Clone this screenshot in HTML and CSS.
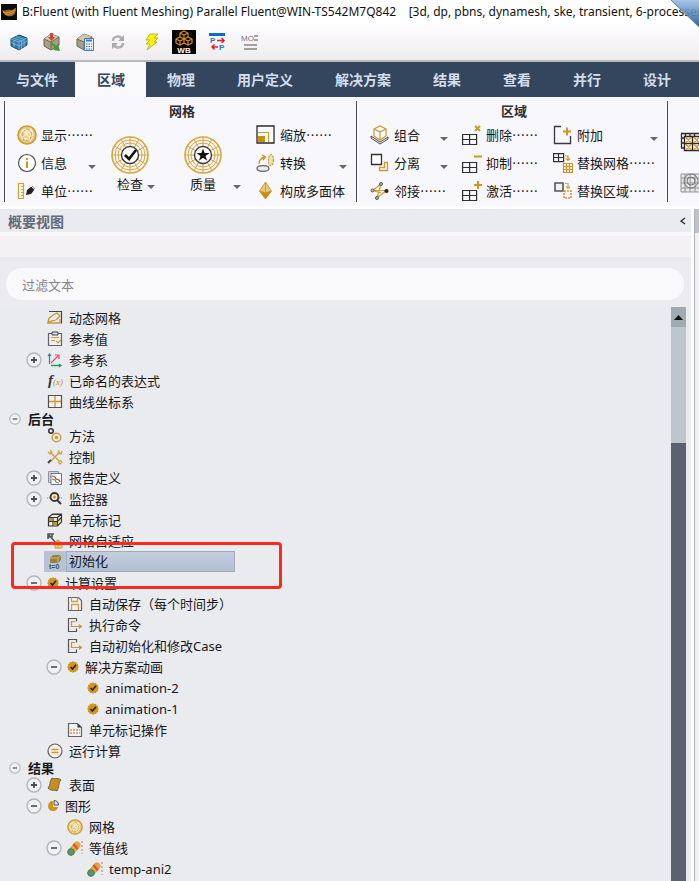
FILE: index.html
```
<!DOCTYPE html>
<html lang="zh-CN">
<head>
<meta charset="utf-8">
<meta name="viewport" content="width=device-width, initial-scale=1">
<title>Fluent</title>
<link rel="stylesheet" href="styles.css">
</head>
<body>
<svg class="defs" aria-hidden="true">
  <defs>
    <linearGradient id="fold" x1="0" y1="0" x2="0" y2="1"><stop offset="0" stop-color="#9fc0e2"/><stop offset="1" stop-color="#1f5798"/></linearGradient>
    <linearGradient id="heat" x1="0" y1="1" x2="1" y2="0"><stop offset="0" stop-color="#3d9a50"/><stop offset=".3" stop-color="#8fb548"/><stop offset=".55" stop-color="#f0b030"/><stop offset=".75" stop-color="#e23a2c"/><stop offset="1" stop-color="#e9a545"/></linearGradient>
    <symbol id="minus" viewBox="0 0 16 16"><circle cx="8" cy="8" r="7" fill="#f1f1f4" stroke="#b2b4ba" stroke-width="1.4"/><path d="M5 8h6" stroke="#4b4d55" stroke-width="1.6"/></symbol>
    <symbol id="plus" viewBox="0 0 16 16"><circle cx="8" cy="8" r="7" fill="#f1f1f4" stroke="#b2b4ba" stroke-width="1.4"/><path d="M5 8h6M8 5v6" stroke="#4b4d55" stroke-width="1.8"/></symbol>
    <symbol id="down" viewBox="0 0 8 4"><path d="M0 0h8L4 4z" fill="#66666b"/></symbol>
    <symbol id="mesh" viewBox="0 0 20 20"><circle cx="10" cy="10" r="9" fill="#e9c780" stroke="#cf9a2c" stroke-width="1.6"/><path d="M4 6l4-2 4 2 4 0M3 10l3-4 4 3 4-5 2 6-4 2-3-3-4 4-2-3M5 14l4-1 4 3 3-4M7 17l2-4 4 3-1-4M8 4l2 5M12 6l2 6" fill="none" stroke="#fdf5e2" stroke-width="1.1"/><path d="M5 8l5-4 5 4-2 7-6 1z" fill="none" stroke="#c88e18" stroke-width=".5"/></symbol>
    <symbol id="web" viewBox="0 0 38 38"><g fill="none" stroke="#dba536"><circle cx="19" cy="19" r="18" stroke-width="1.6"/><circle cx="19" cy="19" r="15"/><circle cx="19" cy="19" r="12"/><path d="M1 19h36M19 1v36M3.400 10l31.200 18M3.400 28L34.600 10M10 3.400l18 31.200M28 3.400L10 34.600"/></g><circle cx="19" cy="19" r="8.500" fill="#fff" stroke="#3c3c3e" stroke-width="1.4"/></symbol>
    <symbol id="check-badge" viewBox="0 0 12 12"><path d="M6 0l1.300 1.300L9 .8l.6 1.700 1.700.5-.5 1.700L12 6l-1.200 1.300.5 1.700-1.700.6L9 11.300l-1.700-.5L6 12l-1.300-1.200-1.700.5-.6-1.700L.8 9l.5-1.700L0 6l1.300-1.300L.8 3l1.600-.5L3 .8l1.700.5z" fill="#d2951b"/><path d="M3.500 6l2 2L9 3.700" fill="none" stroke="#26231d" stroke-width="1.600"/></symbol>
    <symbol id="grid4" viewBox="0 0 22 20"><path d="M.6 9.500h14v10H.6zM7.600 9.500v10M.6 14.500h14" fill="none" stroke="#303033" stroke-width="1.200"/></symbol>
    <symbol id="export" viewBox="0 0 16 16"><path d="M9.500 4.500v-3h-8v13h8v-3" fill="none" stroke="#55565a" stroke-width="1.200"/><path d="M8 4.500H4.500v5H13" fill="none" stroke="#cc962a" stroke-width="1.200"/><path d="M12 7l3.500 2.500L12 12z" fill="#cc962a"/></symbol>
    <symbol id="contour" viewBox="0 0 16 16"><path d="M4 12L10 5" stroke="url(#heat)" stroke-width="7" stroke-linecap="round"/><circle cx="4" cy="12" r="3.200" fill="#65926c" stroke="#557961"/><path d="M15 1v13" stroke="#bb8250" stroke-dasharray="2 2"/></symbol>
    <symbol id="cube" viewBox="0 0 18 18"><path d="M1 6l8-4 8 3v7l-8 5-8-4z" fill="#337caa" stroke="#194b70"/><path d="M1 6l8 3 8-4M9 9v8M1 9.500l8 3.500 8-5M3.500 5l8 3v8M6 3.500l8 3v7.500M4 7v7" fill="none" stroke="#8cc2e0" stroke-width=".7"/></symbol>
    <symbol id="box" viewBox="0 0 18 18"><path d="M1 6l7-5 8 3v8l-8 5-7-4z" fill="#a99f86" stroke="#6c6450"/><path d="M1 6l7 3 8-5L8 1z" fill="#d0c8b2"/><path d="M1 6l7 3v8M8 9l8-5" fill="none" stroke="#746b56"/></symbol>
  </defs>
</svg>

<header class="titlebar">
  <svg class="app-icon" viewBox="0 0 16 16" aria-hidden="true"><path fill="#0c0b09" d="M0 0h16v16H0z"/><path d="M1 6c4 2 6-2 9 0 2 1 3-2 5-2 0 4-1 7-4 8-4 1-8 0-10-6z" fill="#9b6a1c"/><path d="M2 8c4 2 7 0 12-2M4 10c4 1 6 0 9-2" stroke="#dca144" fill="none"/></svg>
  <h1>B:Fluent (with Fluent Meshing) Parallel Fluent@WIN-TS542M7Q842 &nbsp;&nbsp;&nbsp;[3d, dp, pbns, dynamesh, ske, transient, 6-processes]</h1>
  <svg class="fold" viewBox="0 0 28 27" aria-hidden="true"><path d="M0 0h28v27z" fill="url(#fold)" fill-opacity=".92"/><path d="M0 0l28 27" stroke="#607d9e"/></svg>
</header>

<div class="toolbar" role="toolbar" aria-label="工具栏">
  <button aria-label="网格"><svg class="i18"><use href="#cube"/></svg></button>
  <button aria-label="导入"><svg class="i18" viewBox="0 0 18 18"><use href="#box"/><path d="M7 0h3v4h2L8.500 8 5 4h2z" fill="#c94a32"/><path d="M9 9l4 4 2-2 2 7-7-1 2-2-4-4z" fill="#3c9b32"/></svg></button>
  <button aria-label="计算"><svg class="i18" viewBox="0 0 18 18"><use href="#box"/><path d="M8.500 5.500h9v12h-9z" fill="#edf3fb" stroke="#4779b2"/><path d="M10 7.500h6" stroke="#4779b2" stroke-width="2"/><path d="M10 11h6M10 13.500h6M10 16h6" stroke="#356ba9" stroke-dasharray="1.500 1"/></svg></button>
  <button aria-label="刷新"><svg class="i18" viewBox="0 0 18 18"><path d="M4 8c0-5 7-6 9-2M14 10c0 5-7 6-9 2" fill="none" stroke="#b0b0b1" stroke-width="2.500"/><path d="M15 2v6H9zM3 16v-6h6z" fill="#aaaaab"/></svg></button>
  <button aria-label="快速执行"><svg class="i18" viewBox="0 0 18 18"><path d="M8 1h8l-4 4h4l-4 4h3L5 17l3-6H4l4-4H4z" fill="#fff30a" stroke="#b5a818" stroke-width=".8"/></svg></button>
  <button aria-label="Workbench"><svg class="i24" viewBox="0 0 24 24"><path fill="#050505" d="M0 0h24v24H0z"/><g fill="none" stroke="#d58c1c" stroke-width="1.200"><path d="M12 1l4 2v4l-4 2-4-2V3zM8 3l4 2 4-2M12 5v4M8 7l4 2v4l-4 2-4-2V9zM4 9l4 2 4-2M8 11v4M16 7l4 2v4l-4 2-4-2V9zM12 9l4 2 4-2M16 11v4"/></g><text x="12" y="23" class="wb">WB</text></svg></button>
  <button aria-label="参数"><svg class="i18" viewBox="0 0 18 18"><path d="M1 1.500h16" stroke="#0870cb" stroke-width="3"/><text x="2" y="10" class="pp">P</text><text x="11" y="17" class="pp">P</text><path d="M9 7.500h7M13.500 5L16 7.500 13.500 10M10 14H4M6.500 11.500L4 14l2.500 2.500" fill="none" stroke="#e41c28" stroke-width="1.500"/></svg></button>
  <button aria-label="监视"><svg class="i18" viewBox="0 0 18 18"><text x="0" y="8" class="mo">MO</text><path d="M13 3h4M13 7h4M3 12h13M3 16h13" stroke="#858587" stroke-width="1.700"/></svg></button>
</div>

<nav class="tabs">
  <a href="#file" class="file">与文件</a>
  <a href="#domain" class="active" aria-current="page">区域</a>
  <a href="#physics">物理</a>
  <a href="#user">用户定义</a>
  <a href="#solution">解决方案</a>
  <a href="#results">结果</a>
  <a href="#view">查看</a>
  <a href="#parallel">并行</a>
  <a href="#design">设计</a>
</nav>

<div class="ribbon">
  <span class="sep"></span>
  <section class="group group-mesh">
    <h2>网格</h2>
    <div class="col">
      <button><svg class="ico"><use href="#mesh"/></svg>显示……</button>
      <button><svg class="ico" viewBox="0 0 20 20"><circle cx="10" cy="10" r="8.500" fill="#fff" stroke="#4e4e52" stroke-width="1.200"/><path d="M10 8.500V15M10 5v2" stroke="#ce981d" stroke-width="2"/></svg>信息<svg class="arrow"><use href="#down"/></svg></button>
      <button><svg class="ico" viewBox="0 0 20 20"><path d="M1.500 2.500h5v15h-5zM4 5.500h2.500M4 8.500h2.500M4 11.500h2.500M4 14.500h2.500" fill="none" stroke="#d4a02e" stroke-width="1.200"/><path d="M9 14l1-5 5-4 3 3-4 5z" fill="#222226"/><path d="M14 5l4 4" stroke="#f7f6f8"/></svg>单位……</button>
    </div>
    <div class="col">
      <button class="big"><svg class="i38" viewBox="0 0 38 38"><use href="#web"/><path d="M14 19l4 4 7-9" fill="none" stroke="#111" stroke-width="2.600"/></svg><span class="caption">检查<svg class="arrow near"><use href="#down"/></svg></span></button>
    </div>
    <div class="col">
      <button class="big"><svg class="i38" viewBox="0 0 38 38"><use href="#web"/><path d="M19 12.500l1.600 4.600h4.900l-4 2.900 1.600 4.700-4.100-2.900-4.100 2.900 1.600-4.700-4-2.900h4.900z" fill="#111"/></svg><span class="caption">质量<svg class="arrow"><use href="#down"/></svg></span></button>
    </div>
    <div class="col">
      <button><svg class="ico" viewBox="0 0 20 20"><path d="M1 1h17v17H1z" fill="#fff" stroke="#29292c" stroke-width="1.300"/><path d="M2 11h7v6H2z" fill="#c88d13"/><path d="M2 7.500h10.500V17" fill="none" stroke="#d09a2e" stroke-width="1.200"/></svg>缩放……</button>
      <button><svg class="ico" viewBox="0 0 20 20"><ellipse cx="7" cy="15.500" rx="6" ry="2.800" fill="#ececec" stroke="#636365" stroke-width="1.200"/><path d="M3 11C3 7 5 5 9 4M6 2l3.500 2L7 7" fill="none" stroke="#cc9527" stroke-width="1.300"/><ellipse cx="15" cy="7" rx="2.500" ry="5.500" fill="#f1dfba" stroke="#cf9d36" stroke-width="1.300" stroke-dasharray="2 1"/></svg>转换<svg class="arrow"><use href="#down"/></svg></button>
      <button><svg class="ico" viewBox="0 0 20 20"><path d="M9.500 1l6 9-6 8-6-8z" fill="#e8c77c"/><path d="M3.500 10l6 2 6-2-6 8z" fill="#c78b12"/><path d="M9.500 1l6 9-6 8-6-8zM9.500 1v11M3.500 10l6 2 6-2" fill="none" stroke="#c99122" stroke-width=".8"/></svg>构成多面体</button>
    </div>
  </section>
  <span class="sep"></span>
  <section class="group group-zone">
    <h2>区域</h2>
    <div class="col">
      <button><svg class="ico" viewBox="0 0 20 20"><path d="M1 11l9 6 8-5v2l-8 5-9-6z" fill="#fff" stroke="#454548"/><path d="M4 4l6-3 6 3v7l-6 4-6-4zM4 4l6 3 6-3M10 7v8" fill="#fff" stroke="#cc962b" stroke-width="1.200"/></svg>组合<svg class="arrow"><use href="#down"/></svg></button>
      <button><svg class="ico" viewBox="0 0 20 20"><path d="M1.500 1.500h10v10h-10z" fill="#fff" stroke="#303033" stroke-width="1.300"/><path d="M14.500 9.500h3v8h-8v-3h5z" fill="none" stroke="#cf9830" stroke-width="1.300"/></svg>分离<svg class="arrow"><use href="#down"/></svg></button>
      <button><svg class="ico" viewBox="0 0 20 20"><path d="M2.500 9.500h14L7 17l4-14zM2.500 9.500L11 12" fill="none" stroke="#d19b2c" stroke-width="1.200"/><g fill="#bbb" stroke="#55565a"><circle cx="2.500" cy="9.500" r="1.500"/><circle cx="11" cy="3" r="1.500"/><circle cx="7" cy="17" r="1.500"/></g><circle cx="16.500" cy="10" r="2" fill="#222"/></svg>邻接……</button>
    </div>
    <div class="col">
      <button><svg class="ico" viewBox="0 0 20 20"><use href="#grid4" width="22" height="20"/><path d="M13 1l5 5M18 1l-5 5" stroke="#cf9721" stroke-width="2"/></svg>删除……</button>
      <button><svg class="ico" viewBox="0 0 20 20"><use href="#grid4" width="22" height="20"/><path d="M12 3.500h8" stroke="#cf9721" stroke-width="2"/></svg>抑制……</button>
      <button><svg class="ico" viewBox="0 0 20 20"><use href="#grid4" width="22" height="20"/><path d="M12 4h8M16 0v8" stroke="#cf9721" stroke-width="2"/></svg>激活……</button>
    </div>
    <div class="col">
      <button><svg class="ico" viewBox="0 0 20 20"><path d="M8 1.500H1.500v17h16V11" fill="none" stroke="#39393c" stroke-width="1.300"/><path d="M10 6.500h8M14 2.500v8" stroke="#cf9721" stroke-width="2"/></svg>附加<svg class="arrow"><use href="#down"/></svg></button>
      <button><svg class="ico" viewBox="0 0 20 20"><path d="M.6.6h10v8H.6zM5.500.600v8M.6 4.500h10" fill="none" stroke="#303033" stroke-width="1.200"/><path d="M12 3h3v4M13 5.500l2 2 2-2M10.500 10.500h9v9h-9zM13.500 10.500v9M16.500 10.500v9M10.500 13.500h9M10.500 16.500h9" fill="none" stroke="#cf9721" stroke-width="1.200"/></svg>替换网格……</button>
      <button><svg class="ico" viewBox="0 0 20 20"><path d="M2 2h8v8H2z" fill="#f1f0f2" stroke="#555558" stroke-width="1.600"/><path d="M12 2.500h3V7M13 5.500l2 2 2-2" fill="none" stroke="#cfa654" stroke-width="1.200"/><path d="M11 10h7v7h-7z" fill="none" stroke="#cf9a32" stroke-width="1.600" stroke-dasharray="2 1"/></svg>替换区域……</button>
    </div>
  </section>
  <span class="sep"></span>
  <section class="group-more">
    <button aria-label="叠加网格"><svg class="i24" viewBox="0 0 24 24"><path d="M1 3.500h18M1 8h3M1 13h3M1 18h3M1.500 3v15M5.500 3v3M10 3v3M14.500 3v3M1 3.500h18" stroke="#29292c" stroke-width="1.300"/><path d="M4.500 6.500h18v14h-18zM12.500 6.500v14M4.500 13.500h18" fill="#fff" stroke="#29292c" stroke-width="1.400"/><path d="M6 7.500l5 5M11 7.500l-5 5M14 7.500l5 5M19 7.500l-5 5M6 14.500l5 5M11 14.500l-5 5M14 14.500l5 5M19 14.500l-5 5" stroke="#cf9830" stroke-width="1.500"/></svg></button>
    <button aria-label="湍流网格"><svg class="i24" viewBox="0 0 24 24"><path d="M1 2h22v18H1zM1 6h22M1 11h22M1 16h22M5 2v18M10 2v18M15 2v18M20 2v18" fill="#e7e7e8" stroke="#929296"/><circle cx="11" cy="9" r="7" fill="none" stroke="#77777b"/><circle cx="11" cy="9" r="4" fill="none" stroke="#77777b"/></svg></button>
  </section>
</div>

<main class="workspace">
  <section class="outline">
    <div class="panel-head"><h2>概要视图</h2><button aria-label="收起"><svg class="chev" viewBox="0 0 6 8"><path d="M5 1L1 4l4 3" fill="none" stroke="#303136" stroke-width="1.400"/></svg></button></div>
    <div class="strip"></div>
    <div class="filter"><input type="text" placeholder="过滤文本" aria-label="过滤文本"></div>
    <div class="tree-area">
      <ul class="tree">
        <li><span class="toggle"></span><span class="item"><svg viewBox="0 0 16 16"><path d="M2 1.500h12.500v12" fill="none" stroke="#444549" stroke-width="1.200"/><path d="M1 13c0-7 3-5 5-8l4-2 3 3-3 3c-2 3-6 0-9 4h12v-4" fill="none" stroke="#c9972f" stroke-width="1.300"/></svg>动态网格</span></li>
        <li><span class="toggle"></span><span class="item"><svg viewBox="0 0 16 16"><path d="M1.500 2.500h13v12h-13z" fill="#f1f0ef" stroke="#626369" stroke-width="1.200"/><path d="M5 1h6v3H5z" fill="#ddd" stroke="#444549"/><path d="M4 6.500h8M4 9.500h4M9 10l2 2 3-3" fill="none" stroke="#cc9c3c" stroke-width="1.200"/></svg>参考值</span></li>
        <li><button class="toggle" aria-label="展开"><svg><use href="#plus"/></svg></button><span class="item"><svg viewBox="0 0 16 16"><path d="M2.500 12V3M1 4l1.500-2L4 4" fill="none" stroke="#267eb5" stroke-width="1.200"/><path d="M4 11l7-7M8 3h4v4" fill="none" stroke="#df5050" stroke-width="1.200"/><path d="M4 13.500h10M12 12l2 1.500-2 1.500" fill="none" stroke="#2b9b63" stroke-width="1.300"/></svg>参考系</span></li>
        <li><span class="toggle"></span><span class="item"><svg viewBox="0 0 16 16"><text x="1" y="12" class="fx">f</text><text x="6" y="12" class="fx-arg">(x)</text></svg>已命名的表达式</span></li>
        <li><span class="toggle"></span><span class="item"><svg viewBox="0 0 16 16"><path d="M1.500 1.500h13v12h-13z" fill="#f6f2ea" stroke="#505157" stroke-width="1.200"/><path d="M8 2v11M2 7.500h12" stroke="#c9953a" stroke-width="1.300"/></svg>曲线坐标系</span></li>
        <li class="root"><button class="toggle" aria-label="收起"><svg><use href="#minus"/></svg></button><strong>后台</strong></li>
        <li><span class="toggle"></span><span class="item"><svg viewBox="0 0 16 16"><circle cx="4" cy="3" r="2.200" fill="none" stroke="#333338" stroke-width="1.600"/><circle cx="9.500" cy="9.500" r="4.300" fill="none" stroke="#cfa044" stroke-width="1.500"/><circle cx="9.500" cy="9.500" r="1.800" fill="#cf9a32"/></svg>方法</span></li>
        <li><span class="toggle"></span><span class="item"><svg viewBox="0 0 16 16"><path d="M3 3l10 10M13 3L4 12" stroke="#d0a650" stroke-width="1.600"/><path d="M1 3l2 2 2-2-2-2M12 1l-1 3 3 1 1-3M11 13l2 2 2-2-2-2" fill="none" stroke="#d0a650" stroke-width="1.300"/><path d="M1 14l3-3" stroke="#434349" stroke-width="2"/></svg>控制</span></li>
        <li><button class="toggle" aria-label="展开"><svg><use href="#plus"/></svg></button><span class="item"><svg viewBox="0 0 16 16"><path d="M1.500 1.500h10v11h-10z" fill="#d0d4db" stroke="#8e929d"/><path d="M4 3.500h10.500v11H4z" fill="#fff" stroke="#70747f"/><path d="M5 6l3 1 1 2 3 1 1 2" fill="none" stroke="#e03835" stroke-width="1.300"/><path d="M5 9l3 1 1 2 3 1" fill="none" stroke="#41a460" stroke-width="1.300"/></svg>报告定义</span></li>
        <li><button class="toggle" aria-label="展开"><svg><use href="#plus"/></svg></button><span class="item"><svg viewBox="0 0 16 16"><path d="M0 7h4M12 7h4" stroke="#d3a54c" stroke-dasharray="1 1" stroke-width="1.500"/><circle cx="7.500" cy="6" r="4" fill="#f4e6c9" stroke="#36363b" stroke-width="1.800"/><circle cx="7.500" cy="6" r="1.500" fill="#d29825"/><path d="M10 9l4 4" stroke="#36363b" stroke-width="2"/></svg>监控器</span></li>
        <li><span class="toggle"></span><span class="item"><svg viewBox="0 0 16 16"><path d="M1.500 5.500l4-3.500h9v8l-4 4h-9zM1.500 5.500h9v8.500M10.500 5.500L14.500 2M6 5.500V14M1.500 9.500h9l4-4M5 2.500h8" fill="#f4ead3" stroke="#343438" stroke-width="1.200"/><path d="M2 6h3.500v3H2zM6.500 10H10v3.500H6.500z" fill="#ca9122"/></svg>单元标记</span></li>
        <li><span class="toggle"></span><span class="item"><svg viewBox="0 0 16 16"><path d="M1 6V1h6M1 1l8 9M5 1v3H1" fill="none" stroke="#55565c" stroke-width="1.600"/><path d="M8 9l3-2 4 3v5H8zM11 7v8M8 12h7" fill="#f0dbab" stroke="#cc962c"/></svg>网格自适应</span></li>
        <li class="selected"><span class="toggle"></span><span class="item"><svg viewBox="0 0 16 16"><path d="M3 4l3-3h8v5l-3 3H3z" fill="#99843d"/><path d="M3 4h8v5M11 4l3-3" fill="none" stroke="#c4b77e"/><text x="2" y="15" class="t0">t=0</text></svg><span class="label">初始化</span></span><span class="callout"></span></li>
        <li><button class="toggle" aria-label="收起"><svg><use href="#minus"/></svg></button><span class="item small"><svg><use href="#check-badge"/></svg>计算设置</span></li>
        <li class="l2"><span class="toggle"></span><span class="item"><svg viewBox="0 0 16 16"><path d="M1.500 1.500h10l3 3v10h-13z" fill="#f3f2f4" stroke="#626369" stroke-width="1.200"/><path d="M4.500 1.500v4h6v-4M4.500 14V8.500h7V14" fill="none" stroke="#cf9e48" stroke-width="1.300"/></svg>自动保存（每个时间步）</span></li>
        <li class="l2"><span class="toggle"></span><span class="item"><svg><use href="#export"/></svg>执行命令</span></li>
        <li class="l2"><span class="toggle"></span><span class="item"><svg><use href="#export"/></svg>自动初始化和修改Case</span></li>
        <li class="l2"><button class="toggle" aria-label="收起"><svg><use href="#minus"/></svg></button><span class="item small"><svg><use href="#check-badge"/></svg>解决方案动画</span></li>
        <li class="l3"><span class="toggle"></span><span class="item small"><svg><use href="#check-badge"/></svg>animation-2</span></li>
        <li class="l3"><span class="toggle"></span><span class="item small"><svg><use href="#check-badge"/></svg>animation-1</span></li>
        <li class="l2"><span class="toggle"></span><span class="item"><svg viewBox="0 0 16 16"><path d="M1.500 1.500h9l4 4v9h-13z" fill="#f3f2f4" stroke="#626369" stroke-width="1.200"/><path d="M10.500 1.500v4h4z" fill="#333"/><path d="M3 8h10M3 11h10" stroke="#cf9e48" stroke-width="1.500" stroke-dasharray="2 1"/></svg>单元标记操作</span></li>
        <li><span class="toggle"></span><span class="item"><svg viewBox="0 0 16 16"><circle cx="8" cy="8" r="7" fill="#f4f0e9" stroke="#626369" stroke-width="1.200"/><path d="M4.500 6.500h7M4.500 9.500h7" stroke="#cf9830" stroke-width="1.500"/></svg>运行计算</span></li>
        <li class="root"><button class="toggle" aria-label="收起"><svg><use href="#minus"/></svg></button><strong>结果</strong></li>
        <li><button class="toggle" aria-label="展开"><svg><use href="#plus"/></svg></button><span class="item"><svg viewBox="0 0 16 16"><path d="M5 1c3 2 5-1 9 2-3 3-1 5-4 11-3-2-5 1-9-3 3-3 1-6 4-10z" fill="#c88e21" stroke="#756140"/></svg>表面</span></li>
        <li><button class="toggle" aria-label="收起"><svg><use href="#minus"/></svg></button><span class="item small"><svg viewBox="0 0 12 12"><path d="M6 1a5 5 0 1 0 5 6H6z" fill="#d0941d"/><path d="M7 .5V5h4.500c0-3-2-4.500-4.500-4.500z" fill="#ddd" stroke="#55555a"/></svg>图形</span></li>
        <li class="l2"><span class="toggle"></span><span class="item"><svg><use href="#mesh"/></svg>网格</span></li>
        <li class="l2"><button class="toggle" aria-label="收起"><svg><use href="#minus"/></svg></button><span class="item"><svg><use href="#contour"/></svg>等值线</span></li>
        <li class="l3"><span class="toggle"></span><span class="item"><svg><use href="#contour"/></svg>temp-ani2</span></li>
      </ul>
      <div class="scrollbar" aria-hidden="true"><div class="up"><svg viewBox="0 0 9 5"><path d="M0 5h9L4.500 0z" fill="#0e1012"/></svg></div><div class="track"></div><div class="thumb"></div></div>
    </div>
  </section>
  <aside class="side"><div class="side-head"></div></aside>
</main>
</body>
</html>
```
FILE: styles.css
```
* { box-sizing: border-box; }
html, body { margin: 0; height: 100%; }
body {
  display: flex;
  flex-direction: column;
  overflow: hidden;
  background: #fbfafc;
  color: #17171a;
  font: 13px/20px "Noto Sans CJK SC", sans-serif;
}
h1, h2, ul { margin: 0; padding: 0; font-size: inherit; }
ul { list-style: none; }
button { border: 0; padding: 0; background: none; color: inherit; font: inherit; text-align: left; }
svg { display: block; flex: none; }
.defs { position: absolute; width: 0; height: 0; }
.i18 { width: 18px; height: 18px; }
.i24 { width: 24px; height: 24px; }
.i38 { width: 38px; height: 38px; }
.wb { font: bold 8px "Liberation Sans", sans-serif; fill: #fff; text-anchor: middle; }
.pp { font: bold 8px "Liberation Sans", sans-serif; fill: #1e77c4; }
.mo { font: 8px "Liberation Sans", sans-serif; fill: #77777a; }
.fx { font: italic bold 15px "Liberation Serif", serif; fill: #333338; }
.fx-arg { font: italic 9px "Liberation Serif", serif; fill: #c48c28; }
.t0 { font: bold 7px "Liberation Sans", sans-serif; fill: #3b536e; }

.titlebar {
  position: relative;
  display: flex;
  align-items: center;
  gap: 5px;
  flex: none;
  height: 24px;
  padding-left: 1px;
  background: #fff;
}
.titlebar h1 { font: 12px/20px "Noto Sans", sans-serif; white-space: nowrap; color: #111; }
.app-icon { width: 16px; height: 16px; }
.fold { position: absolute; top: 0; right: 0; z-index: 1; width: 28px; height: 27px; }

.toolbar {
  display: flex;
  flex: none;
  height: 38px;
  padding-left: 2px;
  border-bottom: 2px solid #b8b9b9;
  background: linear-gradient(#fdfcfe, #eeecef);
}
.toolbar button { display: grid; place-items: center; width: 33px; }

.tabs { display: flex; flex: none; height: 35px; background: #34465e; overflow: hidden; }
.tabs a {
  flex: none;
  padding: 0 21px;
  color: #d2deef;
  font-size: 14px;
  font-weight: 700;
  line-height: 35px;
  text-decoration: none;
  white-space: nowrap;
}
.tabs .file { padding: 0 17px 0 16px; }
.tabs .active { padding-left: 22px; background: #f9f8fb; color: #34465e; }

.ribbon { display: flex; flex: none; height: 112px; padding: 4px 0 0 4px; background: #f8f7fb; border-bottom: 3px solid #fdfdfe; overflow: hidden; }
.sep { flex: none; width: 1px; height: 101px; background: #48494e; }
.group { display: grid; flex: none; grid-template-rows: 20px 84px; }
.group h2 { grid-column: 1 / -1; text-align: center; font-weight: 700; color: #2c2c31; }
.group-mesh { grid-template-columns: 79px 58px 57px 91px; column-gap: 15px; padding: 0 9px 0 12px; }
.group-zone { grid-template-columns: 78px 77px 105px; column-gap: 14px; padding: 0 9px 0 13px; }
.group .col button { display: flex; align-items: center; gap: 4px; width: 100%; height: 28px; white-space: nowrap; }
.ico { width: 20px; height: 20px; }
.arrow { width: 8px; height: 4px; align-self: flex-end; margin: 0 0 8px auto; }
.group .col .big { flex-direction: column; align-items: stretch; gap: 0; height: 84px; padding-top: 15px; }
.caption { display: flex; gap: 4px; padding-left: 6px; }
.caption .arrow { margin-bottom: 5px; }
.caption .near { margin-left: 0; }
.group-more { flex: none; padding: 29px 0 0 12px; }
.group-more button { display: flex; align-items: flex-start; height: 42px; }

.workspace { display: flex; flex: 1; min-height: 0; background: #fdfdfe; }
.outline { display: flex; flex: 1; flex-direction: column; min-width: 0; margin-right: 3px; background: #eaebef; }
.panel-head { display: flex; align-items: center; justify-content: space-between; flex: none; height: 23px; padding: 0 5px 0 8px; background: #e9ebef; }
.panel-head h2 { font-size: 14px; font-weight: 700; color: #626979; }
.chev { width: 6px; height: 8px; }
.strip { flex: none; height: 25px; border-top: 4px solid #f8f7fa; background: #f3f1f4; }
.filter { flex: none; padding: 11px 7px 7px 6px; background: #ecebf0; }
.filter input {
  display: block;
  width: 100%;
  height: 32px;
  padding: 0 16px;
  border: 0;
  border-radius: 16px;
  background: #f9f8fb;
  color: #222;
  font: inherit;
}
.filter input::placeholder { color: #84848a; opacity: 1; }

.tree-area { display: flex; flex: 1; min-height: 0; padding-right: 5px; }
.tree { flex: 1; min-width: 0; font-family: "Noto Sans", "Noto Sans CJK SC", sans-serif; }
.tree li { position: relative; display: flex; align-items: center; height: 21px; padding-left: 26px; white-space: nowrap; }
.tree .l2 { padding-left: 46px; }
.tree .l3 { padding-left: 66px; }
.tree .root { gap: 7px; height: 13px; padding-left: 9px; }
.toggle { flex: none; width: 16px; height: 16px; }
.toggle svg { width: 100%; height: 100%; }
.root .toggle { width: 12px; height: 12px; }
.item { display: flex; align-items: center; gap: 6px; height: 21px; margin-left: 2px; padding-left: 3px; }
.item svg { width: 16px; height: 16px; }
.small svg { width: 12px; height: 12px; }
.selected .item { gap: 3px; width: 191px; background: #b7c3d3; }
.label { flex: 1; height: 21px; padding-left: 2px; border: 1px solid #9cadc2; background: linear-gradient(#c3cddd, #b3c0d2); line-height: 19px; }
.callout { position: absolute; z-index: 1; top: -9px; left: 11px; width: 271px; height: 47px; border: 3px solid #fb2a1f; border-radius: 4px; pointer-events: none; }

.scrollbar { display: flex; flex: none; flex-direction: column; width: 15px; }
.up { display: grid; place-items: center; height: 20px; background: #9faab2; }
.up svg { width: 9px; height: 5px; }
.track { height: 116px; background: #bdc6cd; }
.thumb { flex: 1; background: #5b6171; }

.side { flex: none; width: 5px; border-left: 1px solid #b0b1b5; background: #f1f1f3; }
.side-head { height: 24px; background: #bfc2cc; }
```
